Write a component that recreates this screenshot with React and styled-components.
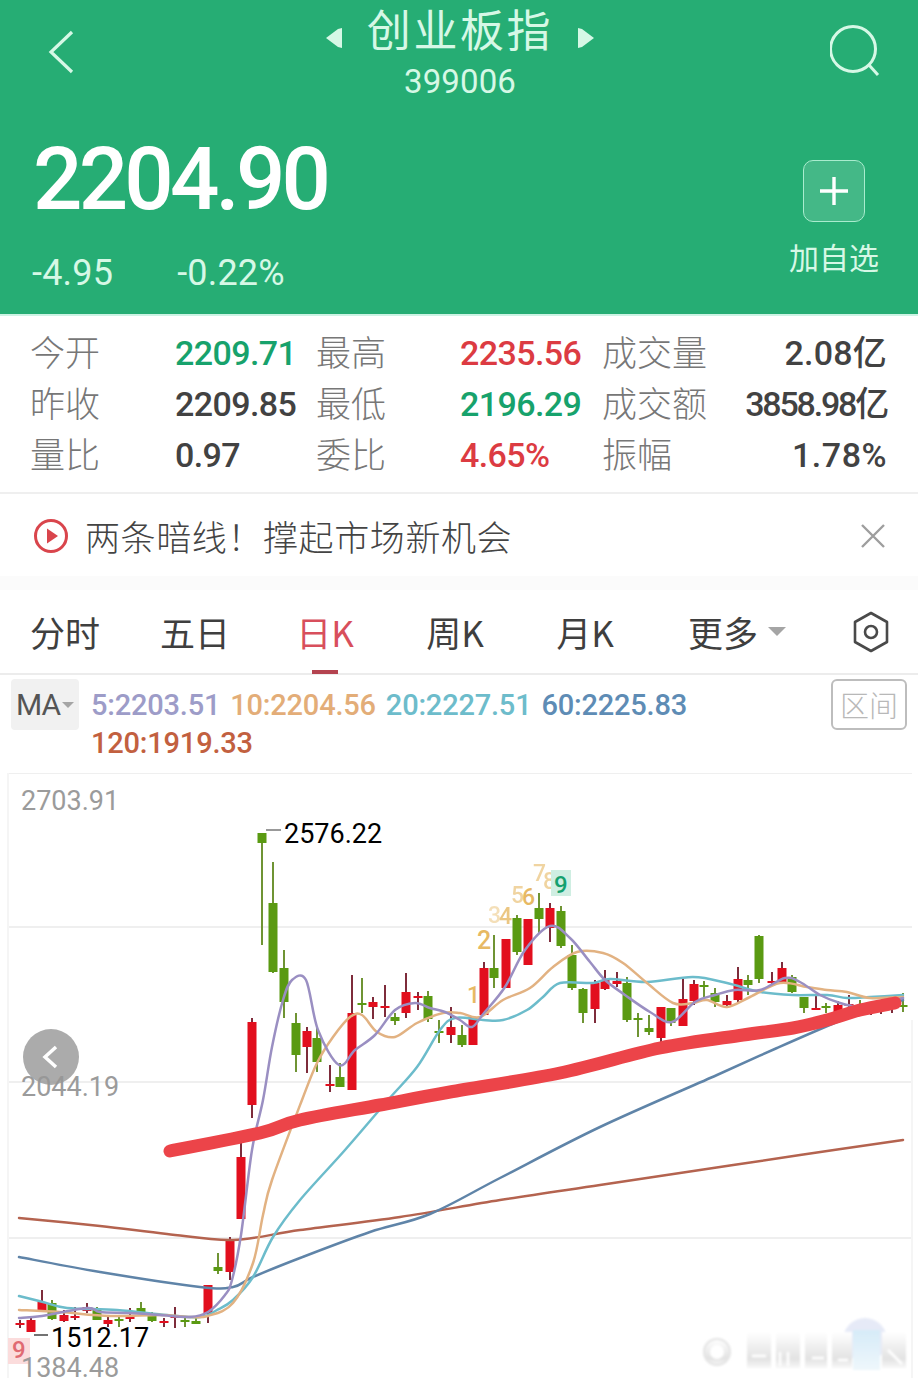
import React from "react";
import styled, { createGlobalStyle } from "styled-components";

const NUM = `Roboto, "Noto Sans CJK SC", sans-serif`;
const CJK = `"Noto Sans CJK SC", Roboto, sans-serif`;
const MINT = "#d6f8e6";

const Global = createGlobalStyle`
  html, body { margin: 0; padding: 0; background: #fff; }
  body { width: 918px; height: 1378px; overflow: hidden; font-family: ${CJK}; }
`;

const Page = styled.div`
  width: 918px;
  height: 1378px;
  overflow: hidden;
  display: flex;
  flex-direction: column;
  background: #fff;
  position: relative;
`;

/* ---------- quote header ---------- */
const Header = styled.header`
  height: 316px;
  flex: none;
  box-sizing: border-box;
  background: #26ad74;
  border-bottom: 2px solid #cdf3e4;
  display: flex;
  flex-direction: column;
`;
const TopBar = styled.div`
  height: 108px;
  display: grid;
  grid-template-columns: 48px 1fr 60px;
  padding: 0 28px 0 46px;
  align-items: start;
`;
const BackIcon = styled.svg`
  margin-top: 30px;
`;
const SearchIcon = styled.svg`
  margin-top: 24px;
`;
const TitleBlock = styled.div`
  display: flex;
  flex-direction: column;
  align-items: center;
  margin-left: -4px;
`;
const TitleRow = styled.div`
  display: flex;
  align-items: center;
  gap: 25px;
  height: 54px;
  margin-top: 1px;
`;
const SwitchArrow = styled.svg`
  margin-top: 20px;
`;
const Title = styled.h1`
  margin: 0;
  font: 400 44px/54px ${CJK};
  letter-spacing: 2.6px;
  color: ${MINT};
`;
const Code = styled.div`
  font: 400 33px/44px ${NUM};
  letter-spacing: 0.1px;
  margin-top: 5px;
  color: ${MINT};
`;
const QuoteRow = styled.div`
  flex: 1;
  display: flex;
  justify-content: space-between;
  padding: 0 39px 0 33px;
`;
const PriceCol = styled.div`
  display: flex;
  flex-direction: column;
`;
const Price = styled.div`
  font: 500 87px/90px ${NUM};
  letter-spacing: -3.8px;
  color: #fff;
  margin-top: 26px;
`;
const Changes = styled.div`
  display: flex;
  gap: 64px;
  margin-top: 27px;
  margin-left: -1px;
  font: 400 36px/44px ${NUM};
  letter-spacing: 0.2px;
  color: ${MINT};
`;
const AddCol = styled.div`
  display: flex;
  flex-direction: column;
  align-items: center;
  margin-top: 52px;
`;
const AddButton = styled.div`
  width: 62px;
  height: 62px;
  box-sizing: border-box;
  border: 1.5px solid #a9ecce;
  border-radius: 10px;
  background: rgba(255, 255, 255, 0.14);
  display: flex;
  align-items: center;
  justify-content: center;
`;
const AddLabel = styled.div`
  font: 400 30px/40px ${CJK};
  color: ${MINT};
  margin-top: 14px;
`;

/* ---------- key figures ---------- */
const Stats = styled.section`
  flex: none;
  height: 178px;
  box-sizing: border-box;
  padding: 12px 31px 0 31px;
  border-bottom: 2px solid #efefef;
  display: grid;
  grid-template-columns: 144px 142px 143px 143px 143px 141px;
  grid-auto-rows: 51px;
  align-items: center;
`;
const StatLabel = styled.div`
  font: 300 35px/51px ${CJK};
  color: #777;
  margin-bottom: 6px;
  margin-left: -1px;
`;
const tone = { up: "#dc3b42", down: "#17a26c", flat: "#424242" };
const StatValue = styled.div`
  font: 500 34px/51px ${NUM};
  letter-spacing: ${(p) => p.$spacing || "-0.6px"};
  white-space: nowrap;
  color: ${(p) => tone[p.$tone || "flat"]};
  ${(p) => p.$end && "justify-self: end;"}
`;

/* ---------- news strip ---------- */
const News = styled.section`
  flex: none;
  height: 96px;
  box-sizing: border-box;
  border-bottom: 14px solid #fbfbfb;
  padding: 1px 32px 0 33px;
  display: flex;
  align-items: center;
  gap: 16px;
`;
const NewsText = styled.div`
  flex: 1;
  font: 300 35px/50px ${CJK};
  letter-spacing: 0.6px;
  color: #444;
`;

/* ---------- period tabs ---------- */
const Tabs = styled.nav`
  flex: none;
  height: 85px;
  box-sizing: border-box;
  border-bottom: 2px solid #ececec;
  display: grid;
  grid-template-columns: repeat(5, 130px) 174px 94px;
  align-items: center;
`;
const Tab = styled.div`
  position: relative;
  text-align: center;
  font: 400 35px/50px ${CJK};
  color: ${(p) => (p.$active ? "#d84f5c" : "#3f3f3f")};
  display: flex;
  justify-content: center;
  align-items: center;
  gap: 10px;
`;
const TabMark = styled.span`
  position: absolute;
  left: 52px;
  top: 63px;
  width: 26px;
  height: 4px;
  background: #b4434f;
`;
const Caret = styled.span`
  width: 0;
  height: 0;
  border-left: ${(p) => p.$s}px solid transparent;
  border-right: ${(p) => p.$s}px solid transparent;
  border-top: ${(p) => p.$s}px solid #a5a5a5;
`;
const GearCell = styled.div`
  display: flex;
  justify-content: center;
`;

/* ---------- moving average legend ---------- */
const Legend = styled.section`
  flex: none;
  height: 98px;
  box-sizing: border-box;
  padding: 4px 11px 0 11px;
  display: flex;
  align-items: flex-start;
`;
const MaChip = styled.div`
  flex: none;
  width: 68px;
  height: 51px;
  border-radius: 4px;
  background: #f1f1f1;
  display: flex;
  align-items: center;
  justify-content: center;
  gap: 2px;
  font: 400 30px/51px ${NUM};
  letter-spacing: -1px;
  color: #555;
`;
const MaValues = styled.div`
  flex: 1;
  min-width: 0;
  box-sizing: border-box;
  padding: 7px 130px 0 12px;
  display: flex;
  flex-wrap: wrap;
  align-content: flex-start;
  column-gap: 10px;
  margin-right: -6px;
`;
const MaValue = styled.span`
  font: 500 29px/38px ${NUM};
  letter-spacing: -0.2px;
  color: ${(p) => p.$c};
`;
const RangeButton = styled.div`
  flex: none;
  width: 76px;
  height: 51px;
  box-sizing: border-box;
  border: 2px solid #bdbdbd;
  border-radius: 6px;
  text-align: center;
  font: 300 29px/47px ${CJK};
  color: #b8b8b8;
`;

/* ---------- candlestick chart ---------- */
const ChartBox = styled.section`
  flex: none;
  width: 918px;
  height: 605px;
  position: relative;
`;
const ChartSvg = styled.svg`
  display: block;
  width: 918px;
  height: 605px;
`;
const AxisText = styled.text`
  font: 400 27px ${NUM};
  fill: #9b9b9b;
`;
const PeakText = styled.text`
  font: 400 27px ${NUM};
  fill: #000;
`;
const SeqText = styled.text`
  font: 500 ${(p) => p.$s || 23}px ${NUM};
  fill: ${(p) => p.$c || "#e7b964"};
  opacity: ${(p) => p.$o || 1};
`;
const PagerDot = styled.div`
  position: absolute;
  left: 23px;
  top: 256px;
  width: 56px;
  height: 56px;
  border-radius: 50%;
  background: rgba(150, 150, 150, 0.8);
  display: flex;
  align-items: center;
  justify-content: center;
`;

/* open/close candles: x, high, body top, body bottom, low, colour */
const CANDLES = [
  [20, 1320, 1323, 1325, 1328, "r"], [31, 1316, 1320, 1332, 1332, "r"], [42, 1290, 1302, 1312, 1312, "r"],
  [52, 1300, 1303, 1319, 1320, "g"], [64, 1310, 1315, 1321, 1322, "r"], [75, 1307, 1316, 1318, 1320, "r"],
  [87, 1303, 1307, 1311, 1313, "r"], [97, 1307, 1309, 1320, 1320, "g"], [108, 1317, 1320, 1324, 1327, "r"],
  [119, 1315, 1319, 1320, 1327, "g"], [130, 1308, 1315, 1319, 1322, "r"], [141, 1302, 1308, 1312, 1313, "g"],
  [152, 1312, 1315, 1321, 1322, "g"], [164, 1318, 1321, 1323, 1327, "r"], [175, 1307, 1316, 1317, 1328, "r"],
  [185, 1317, 1320, 1322, 1327, "g"], [196, 1317, 1321, 1324, 1324, "g"], [208, 1285, 1285, 1313, 1323, "r"],
  [218, 1253, 1267, 1271, 1274, "g"], [230, 1237, 1240, 1272, 1280, "r"], [241, 1135, 1157, 1219, 1219, "r"],
  [252, 1018, 1022, 1105, 1118, "r"], [262, 833, 833, 843, 945, "g"], [273, 862, 903, 972, 973, "g"],
  [284, 950, 968, 1002, 1018, "g"], [296, 1013, 1023, 1055, 1072, "g"], [307, 1027, 1031, 1047, 1073, "r"],
  [317, 1028, 1038, 1062, 1072, "g"], [330, 1065, 1084, 1086, 1092, "r"], [340, 1063, 1077, 1087, 1087, "g"],
  [352, 975, 1013, 1090, 1090, "r"], [362, 978, 1003, 1005, 1013, "g"], [373, 997, 1002, 1007, 1019, "r"],
  [385, 985, 1006, 1008, 1017, "r"], [395, 1013, 1017, 1021, 1025, "g"], [406, 973, 992, 1013, 1018, "r"],
  [418, 992, 996, 998, 1010, "r"], [428, 991, 996, 1019, 1022, "g"], [439, 1020, 1031, 1033, 1043, "g"],
  [451, 1007, 1027, 1035, 1043, "r"], [462, 1025, 1035, 1045, 1047, "g"], [473, 1017, 1017, 1045, 1045, "r"],
  [484, 962, 968, 1015, 1015, "r"], [494, 935, 968, 978, 988, "g"], [506, 939, 939, 988, 988, "r"],
  [517, 915, 918, 952, 955, "g"], [528, 919, 919, 965, 965, "r"], [539, 893, 908, 919, 933, "g"],
  [550, 903, 908, 928, 942, "r"], [561, 906, 911, 946, 948, "g"], [572, 945, 955, 988, 990, "g"],
  [583, 988, 989, 1013, 1023, "g"], [595, 980, 983, 1009, 1023, "r"], [605, 970, 980, 989, 990, "r"],
  [617, 972, 981, 984, 987, "r"], [627, 977, 983, 1020, 1022, "g"], [638, 1013, 1018, 1020, 1037, "g"],
  [649, 1015, 1028, 1032, 1035, "g"], [661, 1007, 1007, 1038, 1044, "r"], [671, 1008, 1008, 1023, 1026, "g"],
  [683, 979, 999, 1026, 1026, "r"], [694, 980, 984, 1001, 1005, "r"], [704, 981, 985, 987, 998, "g"],
  [715, 988, 993, 1002, 1007, "g"], [727, 995, 1001, 1005, 1006, "r"], [738, 967, 979, 1000, 1003, "r"],
  [748, 975, 980, 985, 995, "g"], [759, 935, 936, 979, 983, "g"], [772, 972, 981, 982, 984, "r"],
  [782, 962, 968, 982, 983, "r"], [792, 975, 977, 992, 993, "g"], [804, 997, 997, 1008, 1013, "g"],
  [816, 994, 1008, 1010, 1010, "r"], [826, 1003, 1006, 1007, 1013, "g"], [838, 1001, 1005, 1012, 1012, "r"],
  [849, 995, 1004, 1006, 1007, "r"], [860, 1000, 1006, 1007, 1010, "g"], [871, 1004, 1008, 1009, 1015, "r"],
  [881, 1004, 1007, 1008, 1014, "r"], [892, 1002, 1006, 1007, 1013, "r"], [903, 993, 1005, 1007, 1012, "g"],
];

const MA5 = [[19,1318],[42,1316],[87,1308],[100,1312],[130,1313],[160,1315],[190,1317],[208,1312],[225,1295],[232,1280],[241,1235],[252,1150],[263,1100],[272,1047],[283,1000],[292,980],[306,980],[318,1030],[339,1065],[355,1050],[375,1035],[395,1010],[415,1003],[430,1008],[445,1012],[460,1020],[472,1027],[484,1013],[505,987],[525,950],[550,926],[570,938],[590,962],[605,980],[625,995],[650,1012],[672,1022],[695,1002],[715,995],[735,990],[760,990],[785,978],[800,982],[820,995],[840,1003],[860,1007],[880,1004],[903,998]];
const MA10 = [[19,1310],[60,1312],[110,1316],[160,1315],[190,1317],[208,1316],[233,1303],[253,1263],[263,1215],[272,1180],[302,1100],[317,1063],[333,1037],[350,1017],[362,1015],[377,1032],[395,1037],[417,1023],[443,1013],[460,1013],[480,1017],[503,1000],[530,988],[553,967],[577,952],[603,953],[623,963],[647,983],[673,1003],[693,1003],[707,1000],[727,1007],[750,997],[780,983],[807,987],[827,990],[847,992],[870,998],[903,997]];
const MA20 = [[19,1296],[43,1302],[67,1308],[117,1310],[167,1315],[200,1317],[217,1310],[233,1300],[253,1277],[273,1237],[300,1200],[345,1150],[388,1100],[417,1067],[440,1030],[455,1018],[483,1020],[503,1020],[527,1010],[543,997],[560,983],[593,983],[610,979],[647,982],[693,977],[727,983],[760,992],[793,995],[827,995],[847,998],[870,997],[903,995]];
const MA60 = [[19,1257],[100,1272],[200,1287],[233,1287],[253,1277],[300,1258],[370,1232],[430,1214],[500,1178],[600,1127],[717,1075],[777,1048],[837,1022],[870,1010],[903,1000]];
const MA120 = [[19,1218],[100,1226],[167,1234],[233,1240],[300,1230],[400,1217],[500,1200],[600,1185],[700,1170],[800,1155],[903,1140]];
const TREND = [[170,1151],[260,1133],[300,1120],[380,1105],[450,1092],[560,1073],[660,1048],[743,1035],[793,1028],[827,1020],[860,1010],[895,1003]];

// Catmull-Rom through the samples so the averages read as smooth curves.
function smooth(pts) {
  let d = `M${pts[0][0]} ${pts[0][1]}`;
  for (let i = 0; i < pts.length - 1; i++) {
    const a = pts[Math.max(i - 1, 0)];
    const b = pts[i];
    const c = pts[i + 1];
    const e = pts[Math.min(i + 2, pts.length - 1)];
    const c1 = [b[0] + (c[0] - a[0]) / 6, b[1] + (c[1] - a[1]) / 6];
    const c2 = [c[0] - (e[0] - b[0]) / 6, c[1] - (e[1] - b[1]) / 6];
    d += `C${c1[0]} ${c1[1]} ${c2[0]} ${c2[1]} ${c[0]} ${c[1]}`;
  }
  return d;
}

function Candle({ d }) {
  const [x, hi, top, bot, lo, kind] = d;
  const body = kind === "r" ? "#e20f1e" : "#5a9a12";
  const wick = kind === "r" ? "#7e2c3b" : "#6f9434";
  return (
    <g>
      <rect x={x - 1} y={hi} width={2} height={lo - hi} fill={wick} />
      <rect x={x - 4.5} y={top} width={9} height={Math.max(bot - top, 2)} fill={body} />
    </g>
  );
}

function Chart() {
  return (
    <ChartBox>
      <ChartSvg viewBox="0 773 918 605">
        <defs>
          <linearGradient id="smear" x1="0" y1="0" x2="0" y2="1">
            <stop offset="0" stopColor="#fff" />
            <stop offset="0.75" stopColor="#e2e2e2" />
            <stop offset="1" stopColor="#f8f8f8" />
          </linearGradient>
          <linearGradient id="fadeBlue" x1="0" y1="0" x2="0" y2="1">
            <stop offset="0" stopColor="#d6ebf8" />
            <stop offset="1" stopColor="#eef7fb" />
          </linearGradient>
          <filter id="soft">
            <feGaussianBlur stdDeviation="1.2" />
          </filter>
        </defs>
        {/* grid */}
        {[773, 927, 1082, 1238].map((y) => (
          <line key={y} x1="8" x2="912" y1={y} y2={y} stroke="#efefef" strokeWidth="2" />
        ))}
        <line x1="8" x2="8" y1="773" y2="1378" stroke="#f5f5f5" strokeWidth="2" />
        <line x1="912" x2="912" y1="1020" y2="1378" stroke="#f5f5f5" strokeWidth="2" />

        {CANDLES.map((d) => (
          <Candle key={d[0]} d={d} />
        ))}

        {/* moving averages */}
        <g fill="none" strokeLinecap="round" strokeLinejoin="round">
          <path d={smooth(MA120)} stroke="#b4634f" strokeWidth="2.5" />
          <path d={smooth(MA60)} stroke="#5f84a8" strokeWidth="2.5" />
          <path d={smooth(MA20)} stroke="#6cbccb" strokeWidth="2.5" />
          <path d={smooth(MA10)} stroke="#e2b282" strokeWidth="2.5" />
          <path d={smooth(MA5)} stroke="#9a8fc2" strokeWidth="2.5" />
          {/* hand-drawn support line */}
          <path d={smooth(TREND)} stroke="#ec4449" strokeWidth="13" />
        </g>

        {/* sequence counters */}
        <SeqText x="467" y="1003">1</SeqText>
        <SeqText x="477" y="949" $s={25}>2</SeqText>
        <SeqText x="488" y="923" $o={0.45}>3</SeqText>
        <SeqText x="499" y="924" $o={0.8}>4</SeqText>
        <SeqText x="511" y="903" $o={0.6}>5</SeqText>
        <SeqText x="522" y="905" $s={23}>6</SeqText>
        <SeqText x="533" y="881" $o={0.6}>7</SeqText>
        <SeqText x="543" y="889" $o={0.6}>8</SeqText>
        <rect x="551" y="870" width="20" height="26" fill="#cfeee2" />
        <SeqText x="554" y="893" $c="#15a06e" $s={24}>9</SeqText>
        <rect x="8" y="1338" width="22" height="26" fill="#fbdcdc" />
        <SeqText x="12" y="1358" $c="#e06a72" $s={24}>9</SeqText>

        {/* price scale and extremes */}
        <AxisText x="21" y="810">2703.91</AxisText>
        <AxisText x="21" y="1096">2044.19</AxisText>
        <AxisText x="21" y="1377">1384.48</AxisText>
        <line x1="266" x2="281" y1="830" y2="830" stroke="#777" strokeWidth="1.5" />
        <PeakText x="284" y="843">2576.22</PeakText>
        <line x1="34" x2="48" y1="1335" y2="1335" stroke="#444" strokeWidth="1.5" />
        <PeakText x="51" y="1347">1512.17</PeakText>

        {/* corner stamp */}
        <g filter="url(#soft)">
          <circle cx="865" cy="1340" r="22" fill="#e6eaf7" />
          <rect x="853" y="1330" width="27" height="40" fill="url(#fadeBlue)" />
          <g fill="url(#smear)">
            <rect x="747" y="1332" width="24" height="36" />
            <rect x="776" y="1332" width="24" height="36" />
            <rect x="805" y="1332" width="22" height="36" />
            <rect x="832" y="1332" width="20" height="36" />
            <rect x="882" y="1332" width="24" height="36" />
          </g>
          <circle cx="717" cy="1352" r="13" fill="url(#smear)" stroke="#e4e4e4" strokeWidth="2" />
          <circle cx="717" cy="1352" r="7" fill="#fff" />
          <path d="M752 1356h14M780 1352v14M788 1352v14M812 1358h12M838 1360h10M888 1350l14 14" stroke="#fff" strokeWidth="2.5" fill="none" />
        </g>
      </ChartSvg>
      <PagerDot>
        <svg width="24" height="30" viewBox="0 0 24 30">
          <path d="M17 5 L6 15 L17 25" fill="none" stroke="#fff" strokeWidth="3.5" />
        </svg>
      </PagerDot>
    </ChartBox>
  );
}

const STATS = [
  ["今开", "2209.71", "down", "最高", "2235.56", "up", "成交量", "2.08亿", "0.2px"],
  ["昨收", "2209.85", "flat", "最低", "2196.29", "down", "成交额", "3858.98亿", "-2.2px"],
  ["量比", "0.97", "flat", "委比", "4.65%", "up", "振幅", "1.78%", "0.5px"],
];
const MAS = [
  ["5:2203.51", "#9d9cc8"],
  ["10:2204.56", "#e3ad78"],
  ["20:2227.51", "#6dbccb"],
  ["60:2225.83", "#5e8cb5"],
  ["120:1919.33", "#c2603f"],
];
const PERIODS = ["分时", "五日", "日K", "周K", "月K"];

export default function App() {
  return (
    <Page>
      <Global />
      <Header>
        <TopBar>
          <BackIcon width="30" height="44" viewBox="0 0 30 44">
            <path d="M26 2 L5 22 L26 42" fill="none" stroke={MINT} strokeWidth="3.2" />
          </BackIcon>
          <TitleBlock>
            <TitleRow>
              <SwitchArrow width="16" height="20" viewBox="0 0 16 20">
                <path d="M16 0 V20 L12 19 L0 10 L12 1 Z" fill={MINT} />
              </SwitchArrow>
              <Title>创业板指</Title>
              <SwitchArrow width="16" height="20" viewBox="0 0 16 20">
                <path d="M0 0 V20 L4 19 L16 10 L4 1 Z" fill={MINT} />
              </SwitchArrow>
            </TitleRow>
            <Code>399006</Code>
          </TitleBlock>
          <SearchIcon width="60" height="60" viewBox="0 0 60 60">
            <circle cx="23" cy="25" r="22.5" fill="none" stroke={MINT} strokeWidth="3" />
            <path d="M39 41 L48 51" fill="none" stroke={MINT} strokeWidth="3" />
          </SearchIcon>
        </TopBar>
        <QuoteRow>
          <PriceCol>
            <Price>2204.90</Price>
            <Changes>
              <span>-4.95</span>
              <span>-0.22%</span>
            </Changes>
          </PriceCol>
          <AddCol>
            <AddButton>
              <svg width="32" height="32" viewBox="0 0 32 32">
                <path d="M16 2 V30 M2 16 H30" stroke="#fff" strokeWidth="3.4" fill="none" />
              </svg>
            </AddButton>
            <AddLabel>加自选</AddLabel>
          </AddCol>
        </QuoteRow>
      </Header>

      <Stats>
        {STATS.map((r) => (
          <React.Fragment key={r[0]}>
            <StatLabel>{r[0]}</StatLabel>
            <StatValue $tone={r[2]}>{r[1]}</StatValue>
            <StatLabel>{r[3]}</StatLabel>
            <StatValue $tone={r[5]}>{r[4]}</StatValue>
            <StatLabel>{r[6]}</StatLabel>
            <StatValue $end $spacing={r[8]}>{r[7]}</StatValue>
          </React.Fragment>
        ))}
      </Stats>

      <News>
        <svg width="36" height="36" viewBox="0 0 36 36">
          <circle cx="18" cy="18" r="15.5" fill="none" stroke="#d9454c" strokeWidth="3" />
          <path d="M14 10.5 L25 18 L14 25.5 Z" fill="#d9454c" />
        </svg>
        <NewsText>两条暗线！撑起市场新机会</NewsText>
        <svg width="26" height="26" viewBox="0 0 26 26">
          <path d="M2 2 L24 24 M24 2 L2 24" stroke="#9e9e9e" strokeWidth="2.4" fill="none" />
        </svg>
      </News>

      <Tabs>
        {PERIODS.map((p, i) => (
          <Tab key={p} $active={i === 2}>
            {p}
            {i === 2 && <TabMark />}
          </Tab>
        ))}
        <Tab>
          更多
          <Caret $s={9} />
        </Tab>
        <GearCell>
          <svg width="38" height="42" viewBox="0 0 38 42">
            <path d="M19 2 L35 11 V31 L19 40 L3 31 V11 Z" fill="none" stroke="#4a4a4a" strokeWidth="2.6" strokeLinejoin="round" />
            <circle cx="19" cy="21" r="6" fill="none" stroke="#4a4a4a" strokeWidth="2.6" />
          </svg>
        </GearCell>
      </Tabs>

      <Legend>
        <MaChip>
          MA
          <Caret $s={6} />
        </MaChip>
        <MaValues>
          {MAS.map(([t, c]) => (
            <MaValue key={t} $c={c}>
              {t}
            </MaValue>
          ))}
        </MaValues>
        <RangeButton>区间</RangeButton>
      </Legend>

      <Chart />
    </Page>
  );
}
